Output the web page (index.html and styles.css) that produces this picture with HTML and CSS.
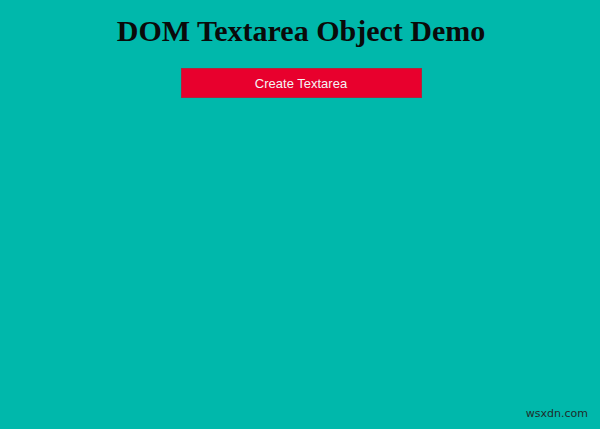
FILE: index.html
```html
<!DOCTYPE html>
<html>
<head>
<meta charset="utf-8">
<link rel="stylesheet" href="styles.css">
</head>
<body>
<div class="page">
  <h1 class="title">DOM Textarea Object Demo</h1>
  <button class="create-btn">Create Textarea</button>
</div>
<div class="watermark">wsxdn.com</div>
</body>
</html>
```
FILE: styles.css
```css
html, body {
  margin: 0;
  padding: 0;
  height: 100%;
}
body {
  background: #00b8ab;
  position: relative;
  overflow: hidden;
}
.page {
  display: flex;
  flex-direction: column;
  align-items: center;
  padding-left: 2px;
}
.title {
  font-family: "Liberation Serif", "Times New Roman", serif;
  font-weight: bold;
  font-size: 30px;
  line-height: 35px;
  color: #0a0a0a;
  margin: 13px 0 0 0;
}
.create-btn {
  margin-top: 20px;
  width: 241px;
  height: 30px;
  background: #e8002d;
  border: 1px solid #b0253d;
  color: #f4f4f4;
  font-family: "Liberation Sans", Arial, sans-serif;
  font-size: 13px;
  padding: 0;
}
.watermark {
  position: absolute;
  right: 12px;
  bottom: 9px;
  font-family: "DejaVu Sans", sans-serif;
  font-size: 11px;
  color: #1f2c2a;
}
```
